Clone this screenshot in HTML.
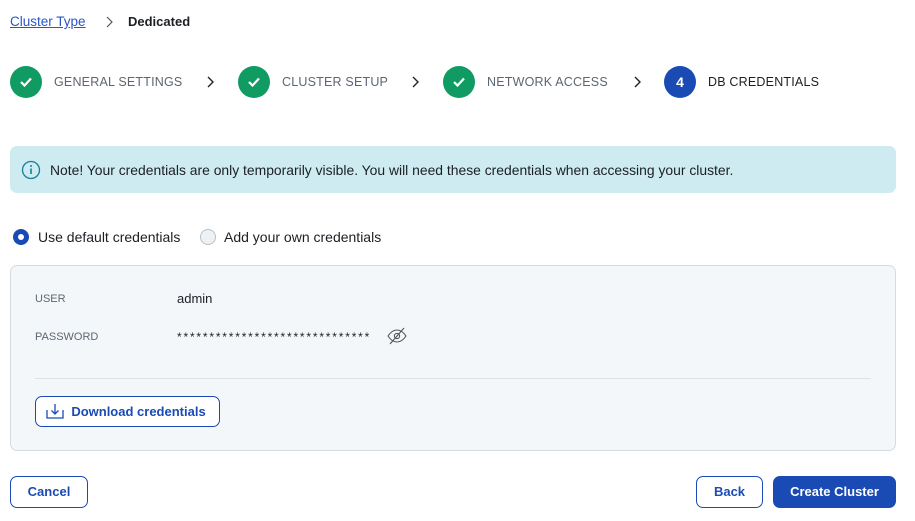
<!DOCTYPE html>
<html><head><style>
body{margin:0;width:915px;height:521px;background:#fff;font-family:"Liberation Sans",sans-serif;position:relative;overflow:hidden;color:#1c1f24}
.a{position:absolute;white-space:nowrap}
.c{position:absolute;width:32px;height:32px;border-radius:50%;background:#0f9b62;top:66px}
.c svg{position:absolute;left:9px;top:10px}
.lbl{top:75px;font-size:12.5px;color:#5c6670;letter-spacing:.2px}
.chev{top:75px}
.btn{position:absolute;border:1px solid #1a4bb5;border-radius:7px;color:#1a4bb5;font-weight:bold;font-size:13px;text-align:center;box-sizing:border-box;background:#fff}
</style></head><body>
<div class="a" style="left:10px;top:14px;font-size:13.5px;color:#2b55c4;text-decoration:underline">Cluster Type</div>
<svg class="a" style="left:105px;top:16px" width="8" height="12"><path d="M2 1l5 5-5 5" fill="none" stroke="#555" stroke-width="1.2"/></svg>
<div class="a" style="left:128px;top:14px;font-size:13px;font-weight:bold">Dedicated</div>

<div class="c" style="left:10px"><svg width="14" height="12"><path d="M2 6l3.5 3.5L12 2.5" fill="none" stroke="#fff" stroke-width="2.2"/></svg></div>
<div class="a lbl" style="left:54px">GENERAL SETTINGS</div>
<svg class="a chev" style="left:206px" width="8" height="14"><path d="M2 2l5 5-5 5" fill="none" stroke="#222" stroke-width="1.4"/></svg>
<div class="c" style="left:238px"><svg width="14" height="12"><path d="M2 6l3.5 3.5L12 2.5" fill="none" stroke="#fff" stroke-width="2.2"/></svg></div>
<div class="a lbl" style="left:282px">CLUSTER SETUP</div>
<svg class="a chev" style="left:411px" width="8" height="14"><path d="M2 2l5 5-5 5" fill="none" stroke="#222" stroke-width="1.4"/></svg>
<div class="c" style="left:443px"><svg width="14" height="12"><path d="M2 6l3.5 3.5L12 2.5" fill="none" stroke="#fff" stroke-width="2.2"/></svg></div>
<div class="a lbl" style="left:487px">NETWORK ACCESS</div>
<svg class="a chev" style="left:633px" width="8" height="14"><path d="M2 2l5 5-5 5" fill="none" stroke="#222" stroke-width="1.4"/></svg>
<div class="c" style="left:664px;background:#1a4bb5;color:#fff;font-weight:bold;font-size:14px;text-align:center;line-height:32px">4</div>
<div class="a lbl" style="left:708px;color:#1c1f24">DB CREDENTIALS</div>

<div class="a" style="left:10px;top:146px;width:886px;height:47px;background:#cdebf0;border-radius:7px"></div>
<svg class="a" style="left:21px;top:160px" width="20" height="20"><circle cx="10" cy="10" r="8.5" fill="none" stroke="#1a7f95" stroke-width="1.3"/><path d="M10 8.5v5.5" stroke="#1a7f95" stroke-width="1.6"/><circle cx="10" cy="6" r="1" fill="#1a7f95"/></svg>
<div class="a" style="left:50px;top:162px;font-size:13.9px;color:#1c1f24">Note! Your credentials are only temporarily visible. You will need these credentials when accessing your cluster.</div>

<div class="a" style="left:13px;top:229px;width:16px;height:16px;border-radius:50%;background:#1a4bb5"></div>
<div class="a" style="left:18px;top:234px;width:6px;height:6px;border-radius:50%;background:#fff"></div>
<div class="a" style="left:38px;top:229px;font-size:14px">Use default credentials</div>
<div class="a" style="left:200px;top:229px;width:14px;height:14px;border-radius:50%;background:#eef1f4;border:1px solid #b8c0c8"></div>
<div class="a" style="left:224px;top:229px;font-size:14px">Add your own credentials</div>

<div class="a" style="left:10px;top:265px;width:886px;height:186px;background:#f4f7fa;border:1px solid #d5dbe1;border-radius:7px;box-sizing:border-box"></div>
<div class="a" style="left:35px;top:293px;font-size:11px;color:#5c6670">USER</div>
<div class="a" style="left:177px;top:291px;font-size:13px">admin</div>
<div class="a" style="left:35px;top:331px;font-size:11px;color:#5c6670">PASSWORD</div>
<div class="a" style="left:177px;top:330px;font-size:12px;letter-spacing:1.8px">******************************</div>
<svg class="a" style="left:386px;top:326px" width="22" height="20"><path d="M2 10c3-4.5 6-6 9-6s6 1.5 9 6c-3 4.5-6 6-9 6s-6-1.5-9-6z" fill="none" stroke="#555" stroke-width="1.1"/><circle cx="11" cy="10" r="2.6" fill="none" stroke="#555" stroke-width="1.1"/><path d="M4 18L18 2" stroke="#555" stroke-width="1.1"/></svg>
<div class="a" style="left:35px;top:378px;width:836px;height:1px;background:#dde2e7"></div>
<div class="btn" style="left:35px;top:396px;width:185px;height:31px;line-height:29px;padding-left:22px">Download credentials</div>
<svg class="a" style="left:45px;top:402px" width="20" height="18"><path d="M2 8v8h16V8" fill="none" stroke="#1a4bb5" stroke-width="1.3"/><path d="M10 2v10M6.5 8.5L10 12l3.5-3.5" fill="none" stroke="#1a4bb5" stroke-width="1.3"/></svg>

<div class="btn" style="left:10px;top:476px;width:78px;height:32px;line-height:30px">Cancel</div>
<div class="btn" style="left:696px;top:476px;width:67px;height:32px;line-height:30px">Back</div>
<div class="btn" style="left:773px;top:476px;width:123px;height:32px;line-height:30px;background:#1a4bb5;color:#fff">Create Cluster</div>
</body></html>
